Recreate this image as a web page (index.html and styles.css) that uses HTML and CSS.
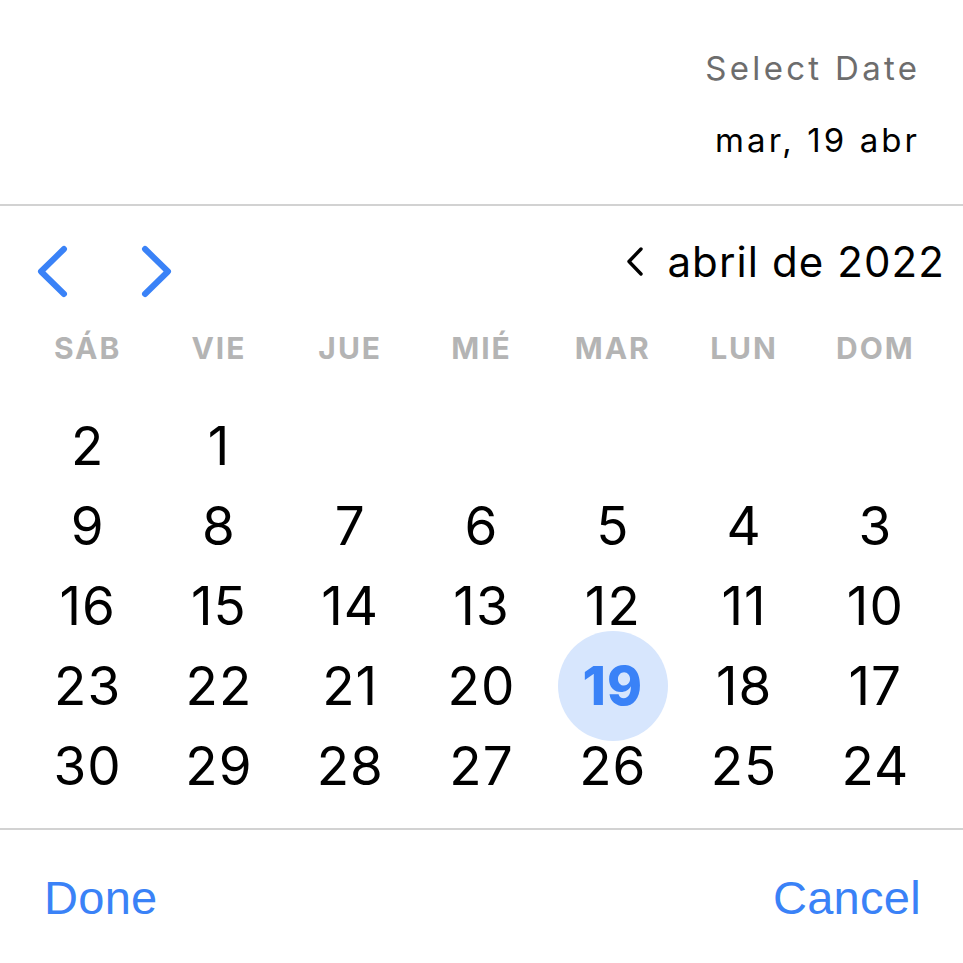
FILE: index.html
```html
<!DOCTYPE html>
<html lang="es">
<head>
<meta charset="utf-8">
<link rel="stylesheet" href="styles.css">
</head>
<body>
<div class="picker">
  <header class="head">
    <div class="head-label">Select Date</div>
    <div class="head-value">mar, 19 abr</div>
  </header>
  <div class="rule"></div>
  <div class="nav">
    <svg class="nav-btn" width="34" height="56" viewBox="0 0 34 56"><path d="M29 6 L6 28.5 L29 51" fill="none" stroke="#3a82f7" stroke-width="6" stroke-linecap="round" stroke-linejoin="round"/></svg>
    <svg class="nav-btn" width="34" height="56" viewBox="0 0 34 56"><path d="M5 6 L28 28.5 L5 51" fill="none" stroke="#3a82f7" stroke-width="6" stroke-linecap="round" stroke-linejoin="round"/></svg>
    <div class="month">
      <svg class="month-chev" width="20" height="30" viewBox="0 0 20 30"><path d="M16 2 L4 14.5 L16 27" fill="none" stroke="#000" stroke-width="3.4" stroke-linecap="round" stroke-linejoin="round"/></svg>
      <span>abril de 2022</span>
    </div>
  </div>
  <div class="week">
    <div>SÁB</div><div>VIE</div><div>JUE</div><div>MIÉ</div><div>MAR</div><div>LUN</div><div>DOM</div>
  </div>
  <div class="days">
    <div class="day">2</div><div class="day">1</div><div class="day"></div><div class="day"></div><div class="day"></div><div class="day"></div><div class="day"></div>
    <div class="day">9</div><div class="day">8</div><div class="day">7</div><div class="day">6</div><div class="day">5</div><div class="day">4</div><div class="day">3</div>
    <div class="day">16</div><div class="day">15</div><div class="day">14</div><div class="day">13</div><div class="day">12</div><div class="day">11</div><div class="day">10</div>
    <div class="day">23</div><div class="day">22</div><div class="day">21</div><div class="day">20</div><div class="day"><span class="sel">19</span></div><div class="day">18</div><div class="day">17</div>
    <div class="day">30</div><div class="day">29</div><div class="day">28</div><div class="day">27</div><div class="day">26</div><div class="day">25</div><div class="day">24</div>
  </div>
  <div class="rule rule-bottom"></div>
  <footer class="foot">
    <span class="btn">Done</span>
    <span class="btn">Cancel</span>
  </footer>
</div>
</body>
</html>
```
FILE: styles.css
```css
html, body {
  margin: 0;
  padding: 0;
  background: #fff;
}
.picker {
  width: 963px;
  height: 963px;
  font-family: Inter, "Liberation Sans", sans-serif;
  color: #000;
}
.head {
  height: 204px;
  box-sizing: border-box;
  padding: 48px 46px 0 0;
  display: flex;
  flex-direction: column;
  align-items: flex-end;
  font-family: Inter, "Liberation Sans", sans-serif;
  font-size: 33px;
  line-height: 40px;
}
.head-label {
  color: #6d6d6d;
  letter-spacing: 3.3px;
  margin-right: -3.3px;
}
.head-value {
  margin-top: 32px;
  letter-spacing: 3.1px;
  margin-right: -3.1px;
}
.rule {
  height: 2px;
  background: #d2d2d2;
}
.nav {
  height: 61px;
  margin-top: 30px;
  display: flex;
  align-items: flex-start;
  padding: 0 18px 0 35px;
}
.nav-btn {
  margin-top: 7px;
  flex: none;
}
.nav-btn + .nav-btn {
  margin-left: 71px;
}
.month {
  margin-left: auto;
  display: flex;
  align-items: flex-start;
  font-size: 42px;
  line-height: 52px;
  letter-spacing: 1.1px;
}
.month-chev {
  margin-top: 11px;
  margin-right: 22px;
}
.week {
  margin-top: 33px;
  display: grid;
  grid-template-columns: repeat(7, 1fr);
  padding: 0 22px;
  font-size: 30px;
  font-weight: 700;
  line-height: 36px;
  color: #b4b4b4;
  text-align: center;
  letter-spacing: 2px;
}
.days {
  margin-top: 40px;
  display: grid;
  grid-template-columns: repeat(7, 1fr);
  grid-auto-rows: 80px;
  padding: 0 22px;
  font-size: 53px;
  line-height: 80px;
  text-align: center;
  letter-spacing: 1px;
}
.day {
  display: flex;
  justify-content: center;
  align-items: center;
}
.sel {
  width: 110px;
  height: 110px;
  border-radius: 50%;
  background: #d7e6fd;
  color: #3a82f7;
  font-weight: 800;
  display: flex;
  align-items: center;
  justify-content: center;
  line-height: 1;
  flex: none;
}
.rule-bottom {
  margin-top: 22px;
}
.foot {
  display: flex;
  justify-content: space-between;
  padding: 42px 42px 0 44px;
  font-family: "Liberation Sans", Arial, sans-serif;
  font-size: 47px;
  line-height: 52px;
  letter-spacing: 0.3px;
  color: #3a82f7;
}
```
